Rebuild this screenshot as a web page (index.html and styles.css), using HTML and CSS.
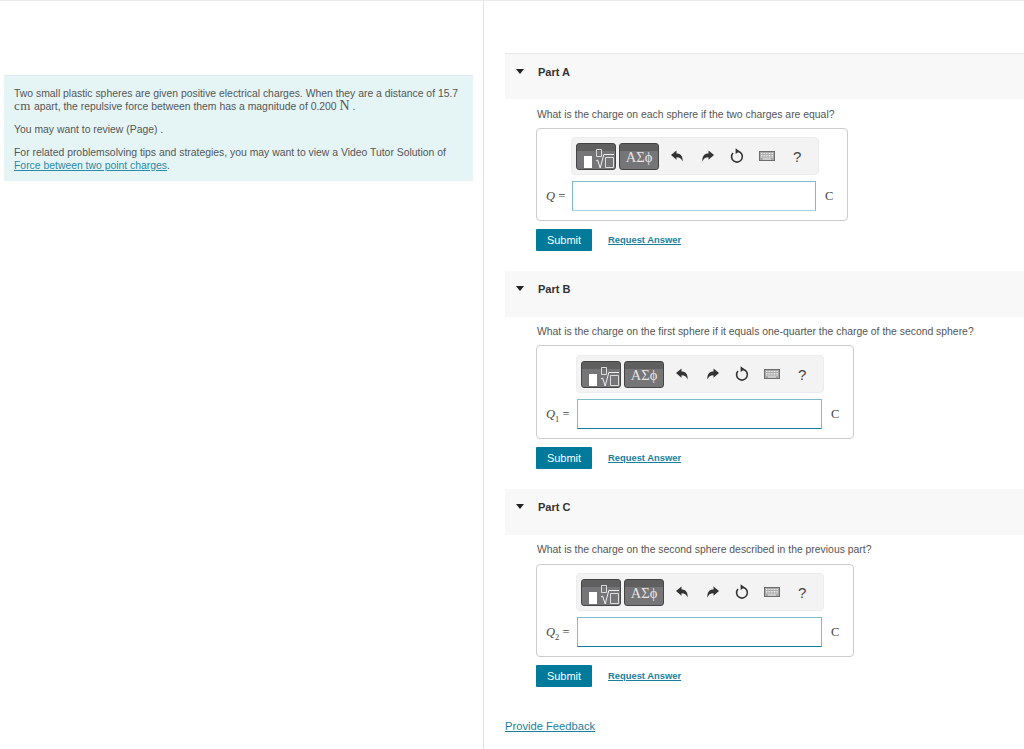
FILE: index.html
```html
<!DOCTYPE html>
<html lang="en">
<head>
<meta charset="utf-8">
<title>Part A</title>
<link rel="stylesheet" href="styles.css">
</head>
<body>
<svg class="defs" width="0" height="0" aria-hidden="true">
  <symbol id="tpl" viewBox="0 0 38 25"><rect x="7" y="12" width="8" height="12" fill="#fff"/><path d="M19.5 5.5h5v7h-5zM28.5 13.5h8v10h-8z" fill="none" stroke="#ddd"/><path d="M19 17l1.6-1 2.6 8 3.6-13.500h10.200" fill="none" stroke="#eee"/></symbol>
  <symbol id="undo" viewBox="0 0 14 14"><path d="M1 6 L6.5 1.5 V4.6 C10.5 4.6 13 7 12.6 12.6 C11.6 9.6 9.6 8.2 6.5 8.2 V10.8 Z"/></symbol>
  <symbol id="redo" viewBox="0 0 14 14"><path d="M13 6 L7.5 1.5 V4.6 C3.5 4.6 1 7 1.4 12.6 C2.4 9.6 4.4 8.2 7.5 8.2 V10.8 Z"/></symbol>
  <symbol id="reset" viewBox="0 0 14 16"><path d="M8.200 3.400 A5.400 5.400 0 1 1 3 5" fill="none" stroke="#333" stroke-width="1.600"/><path d="M5.600 0.200 L5.600 6 L9.600 3.200 Z"/></symbol>
  <symbol id="keys" viewBox="0 0 16 10"><rect x="0.500" y="0.500" width="15" height="9" fill="#a9a9a9" stroke="#6d6d6d"/><path d="M2 2.500H14M2 4.500H14M2 6H14" stroke="#f0f0f0" stroke-dasharray="1 .6"/><path d="M4 8H12" stroke="#eee"/></symbol>
</svg>
<div class="page">
  <aside class="left">
    <div class="intro">
      <p>Two small plastic spheres are given positive electrical charges. When they are a distance of 15.7 <span class="math">cm</span> apart, the repulsive force between them has a magnitude of 0.200 <span class="math unit">N</span> .</p>
      <p>You may want to review (Page) .</p>
      <p>For related problemsolving tips and strategies, you may want to view a Video Tutor Solution of <a href="#">Force between two point charges</a>.</p>
    </div>
  </aside>
  <main class="right">
    <section class="part part-a">
      <h2 class="part-head"><span class="caret"></span>Part A</h2>
      <div class="part-body">
        <p class="question">What is the charge on each sphere if the two charges are equal?</p>
        <div class="answer">
          <div class="toolbar">
            <span class="tool tool-tpl"><svg class="tpl-ic"><use href="#tpl"/></svg></span>
            <span class="tool tool-sym">ΑΣϕ</span>
            <svg class="ic ic-undo"><use href="#undo"/></svg>
            <svg class="ic ic-redo"><use href="#redo"/></svg>
            <svg class="ic ic-reset"><use href="#reset"/></svg>
            <svg class="ic ic-keys"><use href="#keys"/></svg>
            <span class="help">?</span>
          </div>
          <div class="entry">
            <span class="label"><i>Q</i> =</span>
            <span class="input"></span>
            <span class="unit-c">C</span>
          </div>
        </div>
        <div class="actions"><button class="submit">Submit</button><a class="req" href="#">Request Answer</a></div>
      </div>
    </section>
    <section class="part part-b">
      <h2 class="part-head"><span class="caret"></span>Part B</h2>
      <div class="part-body">
        <p class="question">What is the charge on the first sphere if it equals one-quarter the charge of the second sphere?</p>
        <div class="answer">
          <div class="toolbar">
            <span class="tool tool-tpl"><svg class="tpl-ic"><use href="#tpl"/></svg></span>
            <span class="tool tool-sym">ΑΣϕ</span>
            <svg class="ic ic-undo"><use href="#undo"/></svg>
            <svg class="ic ic-redo"><use href="#redo"/></svg>
            <svg class="ic ic-reset"><use href="#reset"/></svg>
            <svg class="ic ic-keys"><use href="#keys"/></svg>
            <span class="help">?</span>
          </div>
          <div class="entry">
            <span class="label"><i>Q</i><sub>1</sub> =</span>
            <span class="input"></span>
            <span class="unit-c">C</span>
          </div>
        </div>
        <div class="actions"><button class="submit">Submit</button><a class="req" href="#">Request Answer</a></div>
      </div>
    </section>
    <section class="part part-c">
      <h2 class="part-head"><span class="caret"></span>Part C</h2>
      <div class="part-body">
        <p class="question">What is the charge on the second sphere described in the previous part?</p>
        <div class="answer">
          <div class="toolbar">
            <span class="tool tool-tpl"><svg class="tpl-ic"><use href="#tpl"/></svg></span>
            <span class="tool tool-sym">ΑΣϕ</span>
            <svg class="ic ic-undo"><use href="#undo"/></svg>
            <svg class="ic ic-redo"><use href="#redo"/></svg>
            <svg class="ic ic-reset"><use href="#reset"/></svg>
            <svg class="ic ic-keys"><use href="#keys"/></svg>
            <span class="help">?</span>
          </div>
          <div class="entry">
            <span class="label"><i>Q</i><sub>2</sub> =</span>
            <span class="input"></span>
            <span class="unit-c">C</span>
          </div>
        </div>
        <div class="actions"><button class="submit">Submit</button><a class="req" href="#">Request Answer</a></div>
      </div>
    </section>
    <a class="feedback" href="#">Provide Feedback</a>
  </main>
</div>
</body>
</html>
```
FILE: styles.css
```css
* { box-sizing: border-box; }
html, body { margin: 0; height: 749px; overflow: hidden; background: #fff; }
body { font-family: "Liberation Sans", Arial, sans-serif; color: #555; }
.defs { display: block; height: 0; }
.page { display: flex; height: 749px; border-top: 1px solid #e9e9e9; }
.left { width: 484px; flex: none; border-right: 1px solid #e3e3e3; padding: 74px 10px 0 4px; }
.intro { background: #e5f5f6; border-top: 1px solid #dcecee; height: 106px; padding: 11px 10px 0 10px; font-size: 10.4px; line-height: 13px; }
.intro p { margin: 0 0 10px; }
.intro a { color: #2a8aa6; }
.math { font-family: "Liberation Serif", serif; font-size: 13px; letter-spacing: .6px; line-height: 0; }
.math.unit { font-size: 14px; letter-spacing: 0; }
.right { flex: 1; padding: 52px 0 0 21px; min-width: 0; }
.part { height: 218px; }
.part-head { margin: 0; height: 46px; background: #f8f8f8; display: flex; align-items: flex-start; padding: 11px 0 0 11px; font-size: 11px; line-height: 14px; font-weight: bold; color: #333; }
.part-a .part-head { border-top: 1px solid #e6e6e6; }
.caret { width: 0; height: 0; margin: 4px 14px 0 0; border-left: 4.5px solid transparent; border-right: 4.5px solid transparent; border-top: 5px solid #222; }
.part-body { padding-left: 31px; }
.question { margin: 0; padding: 8px 0 0 1px; height: 29px; font-size: 10.4px; line-height: 13px; }
.part-a .question { padding-top: 9px; }
.part-b .question { height: 28px; }
.answer { width: 318px; height: 93px; border: 1px solid #ccc; border-radius: 4px; padding: 8px 0 0 39px; }
.part-a .answer { width: 312px; padding-left: 34px; }
.part-b .answer { height: 94px; padding-top: 9px; }
.toolbar { width: 248px; height: 38px; background: #f3f3f3; border: 1px solid #ececec; border-radius: 4px; display: flex; align-items: center; padding-left: 4px; }
.tool { height: 27px; border-radius: 3px; border: 1px solid #444; background: linear-gradient(#5f5f5f 0, #5f5f5f 7px, #757578 7px); flex: none; display: block; }
.tool-tpl { width: 40px; }
.tpl-ic { display: block; width: 38px; height: 25px; }
.tool-sym { width: 40px; margin-left: 3px; font-family: "Liberation Serif", serif; font-size: 14.5px; line-height: 24px; text-align: center; color: #e4e4e4; padding-top: 1px; }
.ic { flex: none; fill: #333; display: block; }
.ic-undo { width: 14px; height: 14px; margin-left: 11px; }
.ic-redo { width: 14px; height: 14px; margin-left: 17px; }
.ic-reset { width: 14px; height: 16px; margin-left: 15px; }
.ic-keys { width: 16px; height: 10px; margin-left: 15px; }
.help { margin-left: 18px; font-size: 15px; color: #444; flex: none; }
.entry { display: flex; align-items: center; margin: 6px 0 0 -30px; height: 30px; }
.label { width: 31px; flex: none; font-family: "Liberation Serif", serif; font-size: 12.5px; white-space: nowrap; color: #444; }
.part-a .label { padding-left: 5px; }
.label sub { font-size: 8.5px; line-height: 0; }
.input { width: 245px; height: 30px; background: #fff; border: 1px solid #7fbccb; border-bottom-color: #0f7c9d; flex: none; }
.part-a .input { width: 244px; border-bottom-color: #a9d3de; }
.unit-c { margin-left: 9px; font-family: "Liberation Serif", serif; font-size: 12.5px; color: #444; }
.actions { display: flex; align-items: center; margin-top: 8px; }
.submit { width: 56px; height: 22px; padding: 0; background: #007a9b; color: #fff; border: 0; border-radius: 1px; font: 11px "Liberation Sans", Arial, sans-serif; }
.req { margin: -2px 0 0 16px; font-size: 9.4px; font-weight: bold; color: #1a7f9e; }
.feedback { display: block; margin-top: 12px; font-size: 11.2px; line-height: 14px; color: #1a7f9e; }
```
